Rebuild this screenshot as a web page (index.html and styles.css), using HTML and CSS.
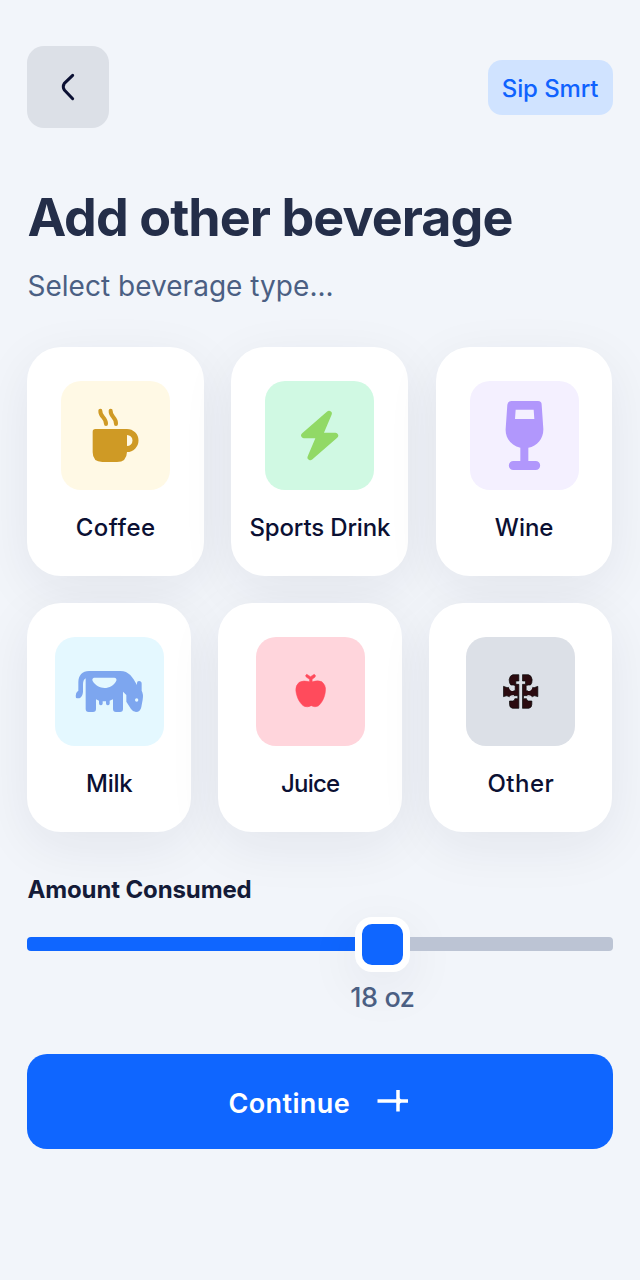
FILE: index.html
```html
<!DOCTYPE html>
<html lang="en">
<head>
<meta charset="utf-8">
<title>Add other beverage</title>
<link rel="stylesheet" href="styles.css">
</head>
<body>
<main class="screen">
  <header class="topbar">
    <button class="back" aria-label="Back">
      <svg viewBox="22 19 246 246"><path d="M159 107L134 131Q128 141 134 151L159 177" fill="none" stroke="#0b1033" stroke-width="9" stroke-linecap="round" stroke-linejoin="round"/></svg>
    </button>
    <span class="brand"><span class="brand-text">Sip Smrt</span></span>
  </header>
  <h1 class="title">Add other beverage</h1>
  <p class="subtitle">Select beverage type...</p>

  <section class="row row-first">
    <article class="card">
      <div class="tile coffee"><svg viewBox="19 18 327 327">
        <g fill="none" stroke="#cf9a25" stroke-width="12" stroke-linecap="round"><path d="M137 107C136 128 154 125 154 147"/><path d="M168 107C167 128 185 125 184 147"/></g>
        <path fill="#cf9a25" fill-rule="evenodd" d="M122 162H217A34.500 34.500 0 0 1 217 231Q216 261 187 261H143Q114 261 114 232V170Q114 162 122 162ZM217 180V213A16.500 16.500 0 0 0 217 180Z"/>
      </svg></div>
      <span class="label l-coffee">Coffee</span>
    </article>
    <article class="card">
      <div class="tile sports"><svg viewBox="16 18 327 327"><path d="M208 116L133 181H180L152 247L227 182H180Z" fill="#91d966" stroke="#91d966" stroke-width="17" stroke-linejoin="round"/></svg></div>
      <span class="label l-sports">Sports Drink</span>
    </article>
    <article class="card">
      <div class="tile wine"><svg viewBox="14 18 327 327"><path fill="#b197fc" fill-rule="evenodd" d="M138 78H218Q229 78 229 89L234 161C235 190 216 213 189 218V258H211A13.500 13.500 0 0 1 211 285H144A13.500 13.500 0 0 1 144 258H165V218C138 211 119 190 121 161L126 89Q127 78 138 78ZM151 104L149 132H207L205 104Z"/></svg></div>
      <span class="label l-wine">Wine</span>
    </article>
  </section>

  <section class="row row-second">
    <article class="card narrow">
      <div class="tile milk"><svg viewBox="14 15 327 327">
        <path fill="#7da6ef" fill-rule="evenodd" d="M116 117H210C236 117 247 136 260 159V153Q260 147 266 147Q274 147 274 155V176Q280 187 277 203L273 225Q270 240 257 240Q247 239 242 231L228 209V189L218 179V231Q218 240 209 240H197Q188 240 188 231V202L178 206V215Q177 220 172 220Q167 220 167 214V208H157V215Q156 220 151 220Q146 220 146 214V206L137 202V231Q137 240 128 240H115Q106 240 106 231V139Q98 144 98 157V178Q98 191 90 197Q86 200 77 198Q74 182 84 176V151C84 130 96 117 116 117ZM131 137Q124 139 127 147C144 175 183 175 198 146Q200 138 192 137ZM259 199A5 5 0 1 0 259 209A5 5 0 0 0 259 199Z"/>
      </svg></div>
      <span class="label l-milk">Milk</span>
    </article>
    <article class="card">
      <div class="tile juice"><svg viewBox="-73.500 -69 327 327"><path fill="#ff4b5c" stroke="#ff4b5c" stroke-width="1.500" d="M87 65V58L77 51Q73 45 79 43L90 50L101 43Q107 45 104 51L95 58V65Q113 60 124 65Q136 75 135 89C134 113 123 130 113 138Q104 143 92 137Q81 143 71 139C59 132 48 113 46 91Q45 76 56 67Q68 60 87 65Z"/></svg></div>
      <span class="label l-juice">Juice</span>
    </article>
    <article class="card">
      <div class="tile other"><svg viewBox="-70.500 -69 327 327">
        <g fill="#2b0b10" stroke="#080708" stroke-width="2" stroke-linejoin="round"><path id="half" d="M70 44H88V63H79V73H88V145H69Q60 143 60 133V123H70Q76 122 76 116H85V107H73Q64 107 60 111Q53 104 42 110V79Q54 85 60 82Q62 91 72 92H77V79Q76 75 71 75H64Q59 70 59 59Q61 46 70 44Z"/><use href="#half" transform="translate(187 0) scale(-1 1)"/></g>
        <path d="M60 81Q62 91 72 91M60 113Q64 107 73 107M127 81Q125 91 115 91M127 113Q123 107 114 107" fill="none" stroke="#dce0e7" stroke-width="4"/>
      </svg></div>
      <span class="label l-other">Other</span>
    </article>
  </section>

  <h2 class="amount"><span class="amount-text">Amount Consumed</span></h2>
  <div class="slider"><div class="filled"></div><div class="thumb"></div><div class="rest"></div></div>
  <div class="value"><span class="value-text">18 oz</span></div>
  <button class="continue"><span class="continue-text">Continue</span>
    <svg class="arrow" viewBox="0 0 32 24"><path d="M0.500 12H31M21 1V22.500" fill="none" stroke="#fff" stroke-width="3.500"/><path d="M22 8.500L25.500 12L22 15.500Z" fill="#fff"/></svg>
  </button>
</main>
</body>
</html>
```
FILE: styles.css
```css
* { box-sizing: border-box; }
body { margin: 0; background: #f2f5fa; font-family: Inter, "Liberation Sans", sans-serif; color: #0b1033; }
.screen { width: 640px; height: 1280px; padding: 46.5px 27.4px 0; display: flex; flex-direction: column; overflow: hidden; }
button { border: 0; padding: 0; font: inherit; }
svg { display: block; }
.topbar { display: flex; justify-content: space-between; align-items: center; height: 81.5px; }
.back { width: 82px; height: 82px; border-radius: 17px; background: #dce0e7; }
.back svg { width: 82px; height: 82px; }
.brand { width: 125px; height: 55px; border-radius: 14px; background: #d0e3ff; color: #0f62fe; display: flex; align-items: center; justify-content: center; padding-top: 2px; font-size: 24px; font-weight: 500; letter-spacing: -.1px; white-space: nowrap; }
.title { margin: 58px 0 0; height: 64px; line-height: 64px; font-size: 52px; font-weight: 700; letter-spacing: -.93px; color: #242e49; white-space: nowrap; }
.subtitle { margin: 18px 0 0; height: 36px; line-height: 36px; font-size: 28px; letter-spacing: .03px; color: #4b5f83; white-space: nowrap; }
.row { display: grid; column-gap: 27.500px; height: 229px; flex: none; }
.row-first { grid-template-columns: 176.500px 177px 176.500px; margin-top: 42.500px; }
.row-second { grid-template-columns: 163.500px 183.500px 183px; margin-top: 27px; }
.card { border-radius: 34px; background: #fff; box-shadow: 0 14px 54px rgba(30, 35, 50, .07); display: flex; flex-direction: column; align-items: center; padding-top: 34px; }
.tile { width: 109px; height: 109px; border-radius: 20px; flex: none; }
.tile svg { width: 109px; height: 109px; }
.coffee { background: #fff9e5; }
.sports { background: #d0f9e3; }
.wine { background: #f4f0ff; }
.milk { background: #e4f8ff; }
.juice { background: #ffd5dc; }
.other { background: #dce0e7; }
.label { margin-top: 22px; height: 32px; line-height: 32px; font-size: 24px; font-weight: 500; white-space: nowrap; }
.l-coffee { letter-spacing: .5px; }
.l-sports { letter-spacing: -.15px; }
.l-milk { letter-spacing: -.3px; }
.l-juice { letter-spacing: -.8px; }
.l-other { letter-spacing: .5px; }
.amount { margin: 42px 0 0; height: 32px; line-height: 32px; font-size: 24px; font-weight: 700; letter-spacing: -.12px; color: #141b38; white-space: nowrap; }
.slider { display: flex; align-items: center; height: 55px; margin-top: 11px; }
.filled { width: 327.500px; height: 14px; background: #0f66ff; border-radius: 4px 0 0 4px; }
.thumb { width: 55px; height: 55px; border: 7px solid #fff; border-radius: 17px; background: #0f66ff; box-shadow: 0 14px 54px rgba(30, 35, 50, .07); }
.rest { flex: 1; height: 14px; background: #bcc4d4; border-radius: 0 4px 4px 0; }
.value { width: 110px; margin-left: 300px; margin-top: 8px; height: 36px; line-height: 36px; text-align: center; font-size: 27px; font-weight: 500; letter-spacing: -.4px; color: #4b5f83; }
.continue { margin-top: 38px; height: 95px; flex: none; border-radius: 20px; background: #0f66ff; color: #fff; display: flex; align-items: center; justify-content: center; gap: 26.500px; font-size: 27px; font-weight: 600; letter-spacing: .4px; padding: 5px 3px 0 0; }
.arrow { width: 32px; height: 24px; margin-top: -5px; }
```
